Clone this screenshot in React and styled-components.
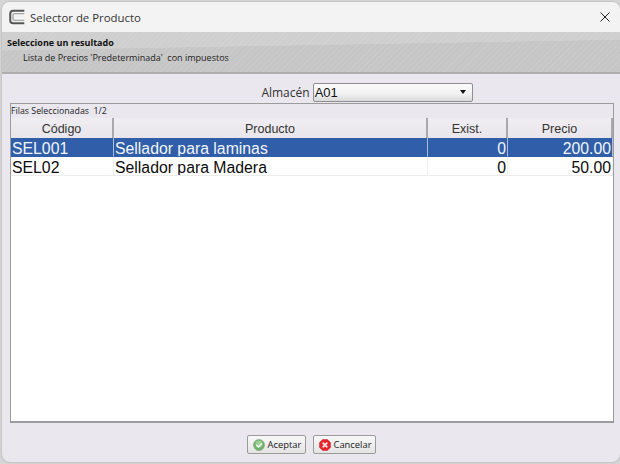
import React from "react";
import styled, { createGlobalStyle } from "styled-components";

const GlobalStyle = createGlobalStyle`
	html, body {
		margin: 0;
		padding: 0;
		width: 620px;
		height: 464px;
		overflow: hidden;
		background: #d6d6d6;
		font-family: "Liberation Sans", Arial, sans-serif;
	}
`;

const Dialog = styled.div`
	box-sizing: border-box;
	width: 618px;
	height: 460px;
	margin: 2px 0 2px 2px;
	display: flex;
	flex-direction: column;
	background: #eae8ee;
	border-radius: 8px;
	overflow: hidden;
	box-shadow: 0 0 2px #9a9a9a;
`;

const TitleBar = styled.div`
	height: 30px;
	flex: none;
	display: flex;
	align-items: center;
	padding: 0 10px 0 6px;
	gap: 4px;
	background: #f3f3f3;
`;

const TitleText = styled.span`
	flex: 1;
	font-family: "Open Sans", sans-serif;
	font-size: 11.4px;
	color: #333;
`;

const Banner = styled.div`
	box-sizing: border-box;
	height: 42px;
	flex: none;
	padding: 5px 0 0 5px;
	background:
		repeating-linear-gradient(135deg, rgba(255, 255, 255, 0.07) 0 1px, transparent 1px 4px),
		linear-gradient(179deg, #cfcfcf 0 36%, #c6c6c6 37% 100%);
	border-bottom: 2px solid #aeaeae;
`;

const BannerTitle = styled.div`
	font-size: 9px;
	line-height: 12px;
	font-weight: bold;
	color: #111;
	font-family: "Open Sans", sans-serif;
`;

const BannerNote = styled.div`
	font-size: 9px;
	line-height: 12px;
	margin: 3px 0 0 16px;
	color: #222;
	font-family: "Open Sans", sans-serif;
	white-space: pre;
`;

const StoreRow = styled.div`
	height: 20px;
	flex: none;
	margin-top: 8px;
	padding-left: 112px;
	display: flex;
	align-items: center;
	justify-content: center;
	gap: 3px;
`;

const StoreLabel = styled.span`
	font-family: "Open Sans", sans-serif;
	font-size: 12px;
	color: #333;
`;

const Combo = styled.div`
	box-sizing: border-box;
	width: 160px;
	height: 19px;
	display: flex;
	align-items: center;
	justify-content: space-between;
	padding: 0 6px 0 1px;
	font-size: 13px;
	color: #111;
	border: 1px solid #8f8f8f;
	border-radius: 2px;
	background: linear-gradient(#fbfbfb, #f1f1f1 60%, #d9d9d9);
`;

const ComboArrow = styled.span`
	width: 0;
	height: 0;
	border-left: 3.5px solid transparent;
	border-right: 3.5px solid transparent;
	border-top: 4px solid #111;
`;

const Panel = styled.div`
	box-sizing: border-box;
	height: 320px;
	flex: none;
	margin: 1px 6px 0 8px;
	display: flex;
	flex-direction: column;
	border: 1px solid #9c9c9c;
	border-bottom-width: 2px;
`;

const Caption = styled.div`
	height: 14px;
	flex: none;
	font-size: 8.8px;
	line-height: 14px;
	color: #222;
	font-family: "Open Sans", sans-serif;
	white-space: pre;
`;

const Row = styled.div`
	display: grid;
	grid-template-columns: 103px 314px 80px 1fr;
	height: ${(p) => (p.$header ? "20px" : "19px")};
	flex: none;
`;

const Head = styled.div`
	box-sizing: border-box;
	text-align: center;
	font-size: 12.5px;
	line-height: 22px;
	color: #333;
	background: linear-gradient(#f0eef2, #e7e5e9);
	border-right: 2px solid #a9a9ad;
`;

const Cell = styled.div`
	box-sizing: border-box;
	padding: 0 1px;
	font-size: 15.8px;
	line-height: 21px;
	white-space: nowrap;
	overflow: hidden;
	text-align: ${(p) => (p.$right ? "right" : "left")};
	color: ${(p) => (p.$selected ? "#f2f5fb" : "#0c0c0c")};
	background: ${(p) => (p.$selected ? "#305ea8" : "#fff")};
	border-right: 1px solid ${(p) => (p.$selected ? "#a9bddc" : "#efefef")};
	border-bottom: 1px solid ${(p) => (p.$selected ? "#305ea8" : "#ececec")};
`;

const Blank = styled.div`
	flex: 1;
	background: #fff;
`;

const Footer = styled.div`
	flex: 1;
	display: flex;
	justify-content: center;
	gap: 7px;
	padding-top: 12px;
`;

const Button = styled.button`
	box-sizing: border-box;
	height: 19px;
	width: ${(p) => p.$width}px;
	margin: 0;
	padding: 0 0 0 5px;
	display: flex;
	align-items: center;
	gap: 3px;
	font-family: "Open Sans", sans-serif;
	font-size: 9.4px;
	color: #222;
	border: 1px solid #9a9a9a;
	border-radius: 2px;
	background: linear-gradient(#f8f8f8, #e4e4e4);
`;

const AppIcon = () => (
	<svg width="18" height="18" viewBox="0 0 16 16" fill="none">
		<path d="M14.500 2.500H4.500C3 2.500 2 3.500 2 5v6c0 1.500 1 2.500 2.500 2.500H14.500" stroke="#555" strokeWidth="1.800" />
		<path d="M14.500 5H5.500c-.6 0-1 .4-1 1v4c0 .6.4 1 1 1H14.500" stroke="#a5a5a5" strokeWidth="1.200" />
	</svg>
);

const CloseIcon = () => (
	<svg width="10" height="10" viewBox="0 0 10 10" fill="none">
		<path d="M0.5 0.5l9 9M9.5 0.5l-9 9" stroke="#222" strokeWidth="1" />
	</svg>
);

const OkIcon = () => (
	<svg width="12" height="12" viewBox="0 0 12 12">
		<circle cx="6" cy="6" r="5.5" fill="#6fb26a" stroke="#7d9f7a" strokeWidth="0.6" />
		<circle cx="6" cy="5" r="3.6" fill="#9ccf95" />
		<path d="M3.4 6l2 2 3.4-3.6" fill="none" stroke="#f4f8f2" strokeWidth="1.4" />
	</svg>
);

const CancelIcon = () => (
	<svg width="12" height="12" viewBox="0 0 12 12">
		<path d="M3.6 0.5h4.8l3.1 3.1v4.8l-3.1 3.1H3.6L0.5 8.400V3.600z" fill="#e8232c" stroke="#c9252b" strokeWidth="0.5" />
		<path d="M3.700 3.700l4.600 4.600M8.300 3.700L3.700 8.300" stroke="#f7e8e8" strokeWidth="1.700" />
	</svg>
);

const rows = [
	{ code: "SEL001", name: "Sellador para laminas", stock: "0", price: "200.00", selected: true },
	{ code: "SEL02", name: "Sellador para Madera", stock: "0", price: "50.00" },
];

export default function App() {
	return (
		<>
			<GlobalStyle />
			<Dialog>
				<TitleBar>
					<AppIcon />
					<TitleText>Selector de Producto</TitleText>
					<CloseIcon />
				</TitleBar>
				<Banner>
					<BannerTitle>Seleccione un resultado</BannerTitle>
					<BannerNote>Lista de Precios 'Predeterminada'  con impuestos</BannerNote>
				</Banner>
				<StoreRow>
					<StoreLabel>Almacén</StoreLabel>
					<Combo>
						A01
						<ComboArrow />
					</Combo>
				</StoreRow>
				<Panel>
					<Caption>Filas Seleccionadas  1/2</Caption>
					<Row $header>
						<Head>Código</Head>
						<Head>Producto</Head>
						<Head>Exist.</Head>
						<Head>Precio</Head>
					</Row>
					{rows.map((r) => (
						<Row key={r.code}>
							<Cell $selected={r.selected}>{r.code}</Cell>
							<Cell $selected={r.selected}>{r.name}</Cell>
							<Cell $selected={r.selected} $right>{r.stock}</Cell>
							<Cell $selected={r.selected} $right>{r.price}</Cell>
						</Row>
					))}
					<Blank />
				</Panel>
				<Footer>
					<Button $width={59}>
						<OkIcon />
						Aceptar
					</Button>
					<Button $width={63}>
						<CancelIcon />
						Cancelar
					</Button>
				</Footer>
			</Dialog>
		</>
	);
}
